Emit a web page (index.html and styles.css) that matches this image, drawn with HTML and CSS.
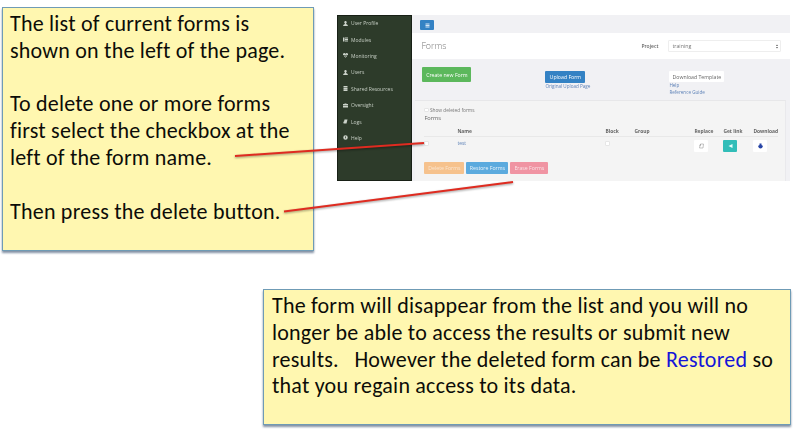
FILE: index.html
```html
<!DOCTYPE html>
<html lang="en">
<head>
<meta charset="utf-8">
<title>Deleting forms</title>
<link rel="stylesheet" href="styles.css">
</head>
<body>
<main class="slide">
  <div class="top">
    <section class="note note-select">
      <p>The list of current forms is<br>shown on the left of the page.</p>
      <p>To delete one or more forms<br>first select the checkbox at the<br>left of the form name.</p>
      <p>Then press the delete button.</p>
    </section>
    <section class="app">
      <nav class="side">
        <a><svg viewBox="0 0 10 10"><path d="M5 0a2.3 2.6 0 0 1 1.2 4.9v1.2L9.5 8v2h-9V8l3.3-1.9V4.9A2.3 2.6 0 0 1 5 0z"/></svg>User Profile</a>
        <a><svg viewBox="0 0 10 10"><path d="M0 1h3v8H0zM4 1h6v2H4zM4 4h6v2H4zM4 7h6v2H4z"/></svg>Modules</a>
        <a><svg viewBox="0 0 10 10"><path d="M0 4a2.6 2.6 0 0 1 5-2 2.6 2.6 0 0 1 5 2H7L6 2.8 4.6 6 3.5 4zM1 5h2l1.7 3L6.5 5H9L5 9.5z"/></svg>Monitoring</a>
        <a><svg viewBox="0 0 10 10"><path d="M5 0a2.3 2.6 0 0 1 1.2 4.9v1.2L9.5 8v2h-9V8l3.3-1.9V4.9A2.3 2.6 0 0 1 5 0z"/></svg>Users</a>
        <a><svg viewBox="0 0 10 10"><path d="M1 0h8v2.5H1zM1 3.3h8v3H1zM1 7.1h8V10H1z"/></svg>Shared Resources</a>
        <a><svg viewBox="0 0 10 10"><path d="M0 2h3V1h4v1h3v3H0zM0 6h10v3H0z"/></svg>Oversight</a>
        <a><svg viewBox="0 0 10 10"><path d="M3 1h6L7 9H1l.5-2H0l.5-1.500H2z"/></svg>Logs</a>
        <a><svg viewBox="0 0 10 10"><path fill-rule="evenodd" d="M5 .5a4.500 4.500 0 1 0 0 9 4.500 4.500 0 0 0 0-9zM4 3h2v1.500L5.500 6h-1zm.5 4h1v1h-1z"/></svg>Help</a>
      </nav>
      <div class="page">
        <div class="bar"><button class="menu"><svg viewBox="0 0 10 10"><path d="M1 1h8v2H1zM1 4h8v2H1zM1 7h8v2H1z"/></svg></button></div>
        <header class="head">
          <h1>Forms</h1>
          <label>Project</label>
          <div class="select"><span>training</span><svg viewBox="0 0 4 8"><path d="M2 0l2 3H0zM2 8L0 5h4z"/></svg></div>
        </header>
        <div class="actions">
          <div><button class="btn create">Create new Form</button></div>
          <div class="upload"><button class="btn up">Upload Form</button><a>Original Upload Page</a></div>
          <div class="template"><button class="btn down">Download Template</button><a>Help</a><a>Reference Guide</a></div>
        </div>
        <div class="panel">
          <div class="show"><i class="check"></i>Show deleted forms</div>
          <div class="caption">Forms</div>
          <div class="row titles"><span></span><b>Name</b><b>Block</b><b>Group</b><b>Replace</b><b>Get link</b><b>Download</b></div>
          <div class="row item">
            <i class="check"></i><a>test</a><i class="check"></i><span></span>
            <button class="ico"><svg viewBox="0 0 10 12"><path d="M3 2h6l-1 8H1l1-5zM3 2v3H1" fill="none" stroke="#888"/></svg></button>
            <button class="ico share"><svg viewBox="0 0 10 10"><path d="M1 5L9 1v8z" fill="#e8fffd"/></svg></button>
            <button class="ico"><svg viewBox="0 0 10 10"><path d="M3 0h4v3l3 2-2 4-3 1-3-1-2-4 3-2z" fill="#2744a5"/></svg></button>
          </div>
          <div class="buttons"><button class="btn delete">Delete Forms</button><button class="btn restore">Restore Forms</button><button class="btn erase">Erase Forms</button></div>
        </div>
      </div>
    </section>
  </div>
  <section class="note note-result">
    <p>The form will disappear from the list and you will no<br>longer be able to access the results or submit new<br>results. &nbsp; However the deleted form can be <a>Restored</a> so<br>that you regain access to its data.</p>
  </section>
  <svg class="pointers" viewBox="0 0 800 439"><path d="M235 156L424 143M284 211.500L513 182"/></svg>
</main>
</body>
</html>
```
FILE: styles.css
```css
* { box-sizing: border-box; }
body { margin: 0; background: #fff; font-family: Carlito, Lato, sans-serif; }
.slide { position: relative; width: 800px; height: 439px; padding: 7px 0 0 2px; overflow: hidden; }
.top { display: flex; align-items: flex-start; height: 282px; }
.note { background: #fff7b0; border: 1px solid #6f9bb5; box-shadow: 0 2px 2px #8492a6; color: #0c0c08; font-size: 22px; line-height: 26.800px; letter-spacing: .22px; white-space: nowrap; }
.note p { margin: 0 0 26.800px; }
.note a { color: #1515d8; }
.note-select { width: 312px; height: 244px; padding: 3px 7px; }
.note-result { width: 528px; height: 136px; margin-left: 261px; padding: 3px 8px; }
.pointers { position: absolute; left: 0; top: 0; width: 800px; height: 439px; filter: drop-shadow(0 1px 1px #0006); }
.pointers path { stroke: #df2b20; stroke-width: 2; fill: none; }

.app { display: flex; width: 453px; height: 166px; margin: 8px 0 0 23px; font: 5px/6px "Open Sans", sans-serif; color: #777; white-space: nowrap; filter: blur(.3px); }
.side { width: 76px; background: #2d3b2a; border: 1px solid #182016; display: flex; flex-direction: column; }
.side a { display: flex; align-items: center; height: 16.400px; padding: 0 0 2px 5px; gap: 3px; color: #c6cec4; }
.side svg { width: 5px; height: 5px; fill: #ccd3ca; }
.page { flex: 1; background: #f1f1f4; }
button { display: block; border: 0; padding: 0; margin: 0; font: inherit; color: #fff; }
.bar { height: 18px; padding: 5px 0 0 8px; }
.menu { width: 14px; height: 10px; background: #3482c4; border-radius: 1px; display: flex; align-items: center; justify-content: center; }
.menu svg { width: 5px; height: 5px; fill: #d5e6f5; }
.head { height: 26px; background: #fff; display: flex; align-items: center; padding: 0 9px; }
.head h1 { margin: 0; width: 220px; font-size: 8.800px; font-weight: 300; line-height: 12px; color: #777; }
.head label { width: 27px; font-weight: 600; color: #666; }
.select { flex: 1; height: 12px; border: 1px solid #eee; border-radius: 1px; display: flex; align-items: center; justify-content: space-between; padding: 0 2px 0 3px; font-size: 5.300px; }
.select svg { width: 2px; height: 5px; fill: #555; }
.actions { height: 41px; display: grid; grid-template-columns: 123px 124px 1fr; padding: 8px 0 0 10px; }
.actions a { display: block; color: #5f83b8; font-size: 4.600px; }
.btn { border-radius: 1px; height: 12px; font-size: 5.200px; }
.create { width: 49px; height: 15px; background: #5cb85c; }
.upload { padding-top: 4px; }
.up { width: 40px; background: #3482c4; }
.template { padding-top: 4px; }
.down { width: 55px; height: 11px; background: #fff; color: #666; }
.template a { line-height: 6.500px; }
.panel { height: 81px; margin: 0 4px 0 3px; padding: 5px 7px 0 9px; background: #f4f4f4; border-top: 1px solid #e7e7e9; border-right: 1px solid #e9e9ec; }
.check { display: block; width: 4.500px; height: 4.500px; background: #fff; border: .5px solid #e6e6e6; border-radius: 1px; }
.show { display: flex; align-items: center; gap: 1px; height: 8px; font-size: 4.800px; }
.caption { line-height: 8px; font-size: 5.700px; color: #666; }
.row { display: grid; grid-template-columns: 33px 148px 29px 60px 29px 30px 1fr; }
.titles { height: 15px; padding-top: 6px; border-bottom: 1px solid #e8e8e8; color: #666; font-size: 4.900px; }
.item { height: 25px; padding-top: 3px; }
.item > a { color: #5f83b8; }
.item > .check { margin-top: 1px; }
.ico { width: 14px; height: 12px; background: #fff; border-radius: 1px; display: flex; align-items: center; justify-content: center; }
.ico svg { width: 5px; height: 6px; }
.share { background: #32bdb8; }
.buttons { display: flex; gap: 2px; }
.delete { width: 40px; background: #f6c28d; color: #fff9; }
.restore { width: 42px; background: #5baade; color: #fffd; }
.erase { width: 38px; background: #f094a3; color: #fffb; }
```
